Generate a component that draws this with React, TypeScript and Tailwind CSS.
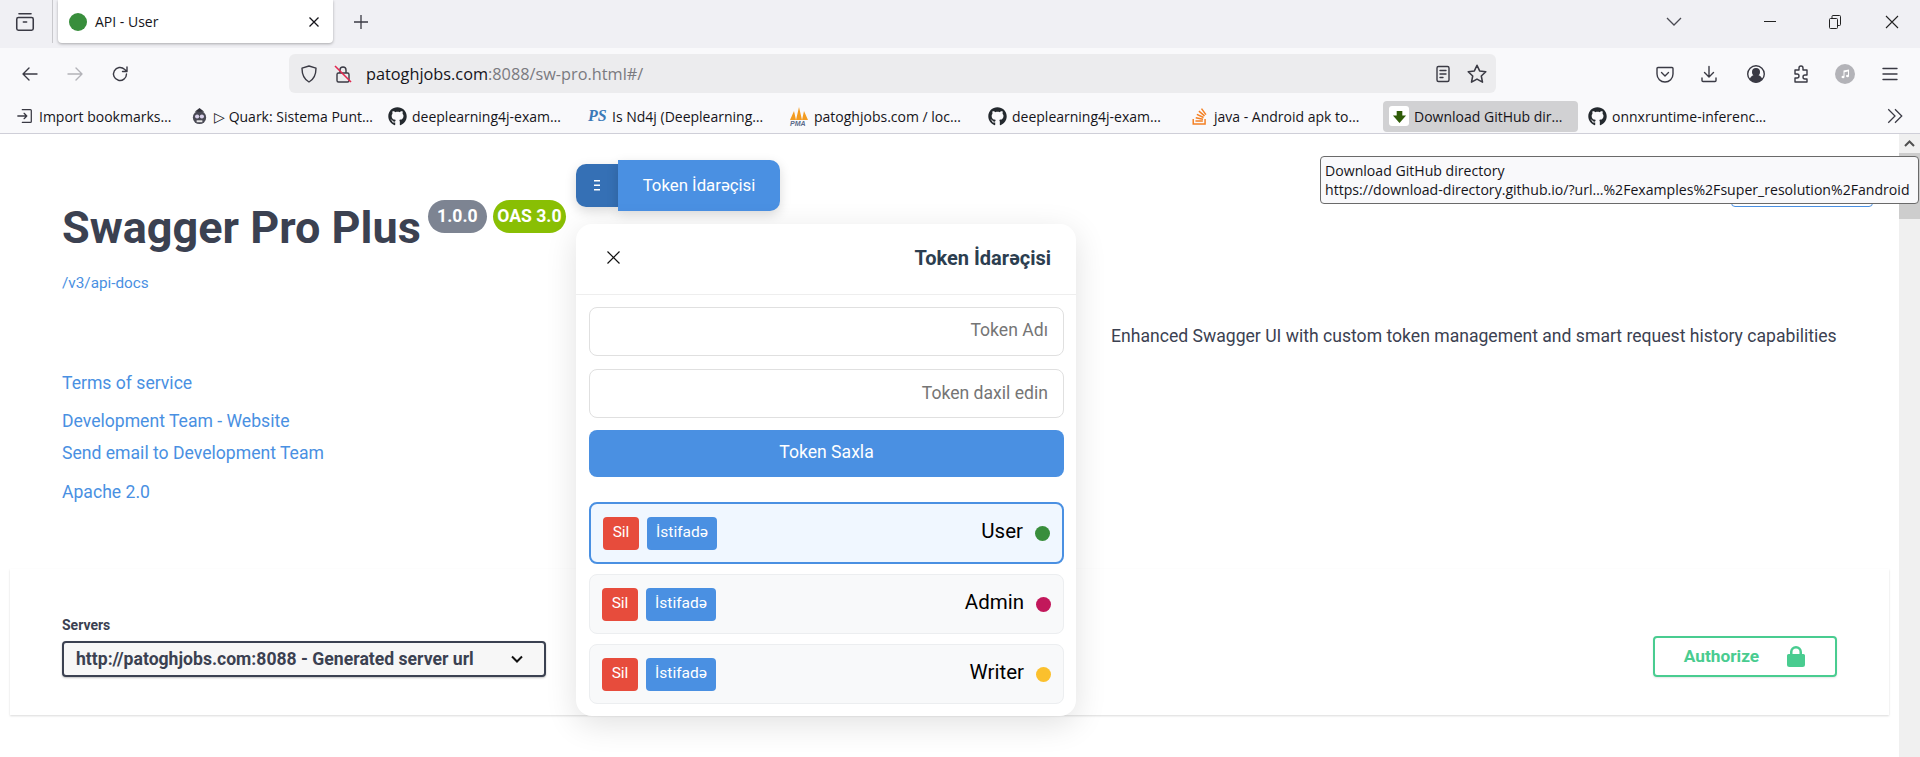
import { FaGithub, FaStackOverflow } from "react-icons/fa";

const ui = "font-['Open_Sans',sans-serif]";

function GH() {
  return <FaGithub className="w-[19px] h-[19px] text-[#24292e] shrink-0" />;
}

function Stroke({ children, size = 20, className = "" }: { children: React.ReactNode; size?: number; className?: string }) {
  return (
    <svg width={size} height={size} viewBox="0 0 20 20" fill="none" stroke="currentColor" strokeWidth="1.4" strokeLinecap="round" strokeLinejoin="round" className={className}>
      {children}
    </svg>
  );
}

const bookmarks = [
  {
    w: 174,
    text: "Import bookmarks…",
    icon: (
      <Stroke size={18} className="text-[#3a3a44]">
        <path d="M7 3h9a1 1 0 0 1 1 1v12a1 1 0 0 1-1 1H7M2 10h10M9 7l3 3-3 3" />
      </Stroke>
    ),
  },
  {
    w: 198,
    text: "▷ Quark: Sistema Punt…",
    icon: (
      <svg width="19" height="19" viewBox="0 0 20 20">
        <circle cx="10" cy="11" r="7" fill="#4a4a55" />
        <path d="M5 5l5-4 5 4z" fill="#33333c" />
        <circle cx="7.5" cy="10" r="2.2" fill="#d8d0ea" />
        <circle cx="12.5" cy="10" r="2.2" fill="#d8d0ea" />
        <rect x="7" y="14" width="6" height="2" fill="#e8e8e8" />
      </svg>
    ),
  },
  { w: 200, text: "deeplearning4j-exam…", icon: <GH /> },
  {
    w: 201,
    text: "Is Nd4j (Deeplearning…",
    icon: <span className="w-[19px] text-[16px] font-bold italic text-[#3b7ab8] font-['Liberation_Serif',serif] leading-none shrink-0">PS</span>,
  },
  {
    w: 199,
    text: "patoghjobs.com / loc…",
    icon: (
      <svg width="20" height="20" viewBox="0 0 20 20">
        <path d="M1 14L5 5l2 9zM7 14l3-13 3 13zM13 14l2-9 4 9z" fill="#f39c22" />
        <text x="1" y="20" fontSize="7" fontWeight="700" fontStyle="italic" fill="#5a6a8a" fontFamily="Liberation Sans">PMA</text>
      </svg>
    ),
  },
  { w: 202, text: "deeplearning4j-exam…", icon: <GH /> },
  {
    w: 199,
    text: "java - Android apk to…",
    icon: <FaStackOverflow className="w-[19px] h-[19px] text-[#f48024] shrink-0" />,
  },
  {
    w: 195,
    text: "Download GitHub dir…",
    active: true,
    icon: (
      <span className="w-[20px] h-[20px] bg-white rounded-[3px] flex items-center justify-center shrink-0">
        <svg width="15" height="15" viewBox="0 0 16 16">
          <path d="M5 2h6v5h4l-7 8-7-8h4z" fill="#2f5c08" />
        </svg>
      </span>
    ),
  },
  { w: 196, ml: 4, text: "onnxruntime-inferenc…", icon: <GH /> },
];

function Scrollbar() {
  return (
    <div className="w-[21px] shrink-0 bg-[#f0f0f0] flex flex-col">
      <div className="h-[19px] flex items-center justify-center">
        <svg width="11" height="8" viewBox="0 0 11 8" fill="none" stroke="#505050" strokeWidth="2">
          <path d="M1 6l4.5-4.5L10 6" />
        </svg>
      </div>
      <div className="h-[66px] bg-[#cdcdcd]" />
    </div>
  );
}

function TokenRow({ name, color, active }: { name: string; color: string; active?: boolean }) {
  return (
    <div
      className={
        active
          ? "h-[62px] rounded-[8px] border-2 border-[#4a90e2] bg-[#f0f7ff] px-[12px] flex items-center justify-between"
          : "h-[60px] rounded-[8px] border border-[#eceef0] bg-[#f8f9fa] px-[12px] flex items-center justify-between"
      }
    >
      <div className="flex gap-[8px]">
        <button className="w-[36px] h-[33px] rounded-[4px] bg-[#e74c3c] text-white text-[15.500px]">Sil</button>
        <button className="w-[70px] h-[33px] rounded-[4px] bg-[#4a90e2] text-white text-[15.500px]">İstifadə</button>
      </div>
      <div className="flex items-center gap-[12px]">
        <span className="text-[20.500px] text-black leading-none -mt-[3px]">{name}</span>
        <span className="w-[15px] h-[15px] rounded-full" style={{ backgroundColor: color }} />
      </div>
    </div>
  );
}

export default function App() {
  return (
    <div className="w-[1920px] h-[757px] overflow-hidden flex flex-col bg-white relative">
      {/* title bar */}
      <div className={`h-[48px] bg-[#f0f0f4] flex text-[#15141a] ${ui}`}>
        <div className="w-[53px] h-[43px] flex items-center justify-center border-r border-[#c8c8cc] mr-[5px]">
          <Stroke size={22} className="text-[#3a3a44] ml-[-3px]">
            <rect x="2.5" y="6" width="15" height="11.5" rx="1.5" />
            <path d="M4.5 2.5h11M8.5 10h3" />
          </Stroke>
        </div>
        <div className="w-[275px] h-[43px] bg-white rounded-b-[4px] shadow-[0_1px_3px_rgba(0,0,0,0.3)] flex items-center pl-[11px] pr-[12px]">
          <span className="w-[18px] h-[18px] rounded-full bg-[#388e3c]" />
          <span className="ml-[8px] text-[14px] flex-1">API - User</span>
          <svg width="14" height="14" viewBox="0 0 14 14" stroke="#15141a" strokeWidth="1.3">
            <path d="M2.5 2.5l9 9M11.5 2.5l-9 9" />
          </svg>
        </div>
        <div className="w-[56px] h-[43px] flex items-center justify-center">
          <svg width="16" height="16" viewBox="0 0 16 16" stroke="#3a3a44" strokeWidth="1.3">
            <path d="M8 1v14M1 8h14" />
          </svg>
        </div>
        <div className="flex-1" />
        <div className="h-[43px] flex items-center">
          <svg width="16" height="10" viewBox="0 0 16 10" fill="none" stroke="#4a4a52" strokeWidth="1.3">
            <path d="M1 1l7 7 7-7" />
          </svg>
          <div className="ml-[82px] w-[12px] h-[1px] bg-[#222]" />
          <svg className="ml-[53px]" width="12" height="14" viewBox="0 0 12 14" fill="none" stroke="#222" strokeWidth="1">
            <rect x="0.5" y="3.5" width="8" height="10" rx="1" />
            <path d="M3 3.5V1.5a1 1 0 0 1 1-1h6.5a1 1 0 0 1 1 1v8a1 1 0 0 1-1 1H8.5" />
          </svg>
          <svg className="ml-[44px] mr-[21px]" width="14" height="14" viewBox="0 0 14 14" stroke="#222" strokeWidth="1.1">
            <path d="M1 1l12 12M13 1L1 13" />
          </svg>
        </div>
      </div>

      {/* nav bar */}
      <div className={`h-[51px] bg-[#f9f9fb] flex items-center ${ui}`}>
        <div className="flex items-center text-[#3a3a44]">
          <Stroke className="ml-[20px]">
            <path d="M17 10H3M9 4l-6 6 6 6" />
          </Stroke>
          <Stroke className="ml-[25px] text-[#b3b3b8]">
            <path d="M3 10h14M11 4l6 6-6 6" />
          </Stroke>
          <Stroke className="ml-[25px]">
            <path d="M16.5 10a6.5 6.5 0 1 1-2-4.7L17 7.5M17 3v4.5h-4.5" />
          </Stroke>
        </div>
        <div className="ml-[159px] w-[1207px] h-[39px] rounded-[6px] bg-[#ececee] flex items-center text-[16.300px]">
          <Stroke size={20} className="ml-[10px] text-[#3a3a44]">
            <path d="M10 2l7 2.2c0 7-2 11-7 13.8C5 15.200 3 11.200 3 4.200z" />
          </Stroke>
          <svg className="ml-[14px]" width="20" height="20" viewBox="0 0 20 20" fill="none" strokeWidth="1.4">
            <rect x="4" y="9" width="12" height="9" rx="1.5" stroke="#3a3a44" />
            <path d="M7 9V6a3 3 0 0 1 6 0v3" stroke="#3a3a44" />
            <path d="M2 2l16 16" stroke="#e22850" strokeWidth="1.6" />
          </svg>
          <span className="ml-[13px] pt-[2px] text-[#15141a]">patoghjobs.com<span className="text-[#7a7a80]">:8088/sw-pro.html#/</span></span>
          <div className="flex-1" />
          <Stroke size={20} className="text-[#3a3a44]">
            <rect x="4" y="2.500" width="12" height="15" rx="1.500" />
            <path d="M7 6.500h6M7 10h6M7 13.500h3" />
          </Stroke>
          <Stroke size={22} className="ml-[13px] mr-[8px] text-[#3a3a44]">
            <path d="M10 2l2.400 5.200 5.600.700-4.100 3.900 1.100 5.600-5-2.800-5 2.800 1.100-5.600L2 7.900l5.600-.7z" />
          </Stroke>
        </div>
        <div className="flex items-center text-[#3a3a44]">
          <Stroke className="ml-[159px]">
            <path d="M3 3.500h14a1 1 0 0 1 1 1V10a8 8 0 0 1-16 0V4.500a1 1 0 0 1 1-1zM6.500 8.500L10 12l3.500-3.500" />
          </Stroke>
          <Stroke className="ml-[24px]">
            <path d="M10 2.500v10M5.500 8.500l4.500 4.500 4.500-4.500M3 14v2.500a1 1 0 0 0 1 1h12a1 1 0 0 0 1-1V14" />
          </Stroke>
          <svg className="ml-[27px]" width="20" height="20" viewBox="0 0 20 20" fill="none" stroke="currentColor" strokeWidth="1.4">
            <circle cx="10" cy="10" r="8.300" />
            <circle cx="10" cy="8" r="3.300" fill="currentColor" />
            <path d="M4.500 15c1-2.500 3-3.500 5.500-3.500s4.500 1 5.500 3.500c-1.500 1.800-3.500 2.800-5.500 2.800s-4-1-5.500-2.800z" fill="currentColor" />
          </svg>
          <Stroke className="ml-[25px]">
            <path d="M4 6h4V4a2 2 0 0 1 4 0v2h4v5h-2a2 2 0 0 0 0 4h2v3H4v-4h2a2 2 0 0 0 0-4H4z" />
          </Stroke>
          <span className="ml-[24px] w-[20px] h-[20px] rounded-full bg-[#b3b3b8] flex items-center justify-center">
            <svg width="10" height="10" viewBox="0 0 10 10" fill="#fff">
              <path d="M3.500 1.500L9 .5V7a1.500 1.200 0 1 1-1-1.100V2.500L4.500 3.200V8a1.500 1.200 0 1 1-1-1.100z" />
            </svg>
          </span>
          <Stroke className="ml-[25px] mr-[20px]">
            <path d="M3 4.500h14M3 10h14M3 15.500h14" />
          </Stroke>
        </div>
      </div>

      {/* bookmarks */}
      <div className={`h-[35px] bg-[#f9f9fb] border-b border-[#cfcfd8] flex items-center pl-[10px] text-[14px] text-[#15141a] ${ui}`}>
        {bookmarks.map((b) => (
          <div
            key={b.text + b.w}
            className={`h-[31px] flex items-center gap-[5px] px-[6px] whitespace-nowrap overflow-hidden rounded-[4px] ${b.active ? "bg-[#d1d1d3]" : ""}`}
            style={{ width: b.w, marginLeft: b.ml ?? 0 }}
          >
            {b.icon}
            <span>{b.text}</span>
          </div>
        ))}
        <div className="flex-1" />
        <svg className="mr-[16px]" width="18" height="18" viewBox="0 0 16 16" fill="none" stroke="#3a3a44" strokeWidth="1.1">
          <path d="M2 2l6 6-6 6M8 2l6 6-6 6" />
        </svg>
      </div>

      {/* page */}
      <div className="flex-1 flex min-h-0 font-['Roboto',sans-serif]">
        <div className="flex-1 relative min-w-0">
          <div className="px-[62px] pt-[64px] flex h-[435px]">
            <div className="w-[1049px]">
              <div className="flex items-start">
                <h1 className="text-[45px] leading-[60px] font-bold text-[#3b4151]">Swagger Pro Plus</h1>
                <span className="ml-[7px] mt-[2px] h-[33px] w-[59px] rounded-[17px] bg-[#7d8492] text-white text-[17.600px] font-bold flex items-center justify-center">1.0.0</span>
                <span className="ml-[6px] mt-[2px] h-[33px] w-[73px] rounded-[17px] bg-[#89bf04] text-white text-[17.600px] font-bold flex items-center justify-center">OAS 3.0</span>
              </div>
              <div className="mt-[15px] text-[15.300px] leading-[20px] text-[#4990e2]">/v3/api-docs</div>
              <div className="mt-[78px] text-[17.600px] leading-[24px] text-[#4990e2]">Terms of service</div>
              <div className="mt-[14px] text-[17.600px] leading-[24px] text-[#4990e2]">Development Team - Website</div>
              <div className="mt-[8px] text-[17.600px] leading-[24px] text-[#4990e2]">Send email to Development Team</div>
              <div className="mt-[15px] text-[17.600px] leading-[24px] text-[#4990e2]">Apache 2.0</div>
            </div>
            <p className="mt-[126px] text-[17.600px] leading-[24px] text-[#3b4151] whitespace-nowrap">
              Enhanced Swagger UI with custom token management and smart request history capabilities
            </p>
          </div>

          <div className="mx-[10px] h-[146px] bg-white shadow-[0_1px_2px_rgba(0,0,0,0.15)] px-[52px] flex items-start justify-between">
            <div className="pt-[47px]">
              <div className="text-[14px] leading-[18px] font-bold text-[#3b4151]">Servers</div>
              <div className="mt-[7px] w-[484px] h-[36px] rounded-[4px] border-2 border-[#3b4151] bg-[#f7f7f7] shadow-[0_1px_2px_rgba(0,0,0,0.25)] flex items-center justify-between pl-[12px] pr-[20px]">
                <span className="text-[17.600px] font-bold text-[#3b4151]">http://patoghjobs.com:8088 - Generated server url</span>
                <svg width="14" height="9" viewBox="0 0 14 9" fill="none" stroke="#111" strokeWidth="2">
                  <path d="M2 1.500l5 5 5-5" />
                </svg>
              </div>
            </div>
            <div className="pt-[67px]">
              <button className="w-[184px] h-[41px] rounded-[4px] border-2 border-[#49cc90] flex items-center justify-center gap-[27px] shadow-[0_1px_2px_rgba(0,0,0,0.1)]">
                <span className="text-[17.300px] font-bold text-[#49cc90]">Authorize</span>
                <svg width="20" height="24" viewBox="0 0 20 24" fill="#49cc90">
                  <path d="M4 9V7a6 6 0 0 1 12 0v2h1.500A1.500 1.500 0 0 1 19 10.500v9a2.500 2.500 0 0 1-2.500 2.500h-13A2.500 2.500 0 0 1 1 19.500v-9A1.500 1.500 0 0 1 2.500 9zm2.500 0h7V7a3.500 3.500 0 0 0-7 0z" />
                </svg>
              </button>
            </div>
          </div>

          {/* button hidden behind the tooltip */}
          <div className="absolute left-[1731px] top-[32px] w-[142px] h-[41px] rounded-[4px] border border-[#4a90e2]" />

          {/* token widget */}
          <div className="absolute left-[576px] top-[26px] flex items-center">
            <div className="w-[42px] h-[43px] rounded-l-[10px] bg-[#3570b5] flex items-center justify-center pr-[1px] shadow-[0_4px_12px_rgba(0,0,0,0.15)]">
              <svg width="8" height="11" viewBox="0 0 8 11" fill="#fff">
                <path d="M1 0h6v1.500H1zM1 4.500h6V6H1zM1 9h6v1.500H1z" />
              </svg>
            </div>
            <div className="w-[162px] h-[51px] rounded-r-[10px] bg-[#4a90e2] text-white text-[16.800px] flex items-center justify-center shadow-[0_4px_12px_rgba(0,0,0,0.15)]">
              Token İdarəçisi
            </div>
          </div>

          <div className="absolute left-[576px] top-[90px] w-[500px] h-[492px] bg-white rounded-[16px] shadow-[0_8px_32px_rgba(0,0,0,0.12)] flex flex-col">
            <div className="h-[71px] border-b border-[#eeeeee] flex items-center justify-between pl-[30px] pr-[25px] pb-[3px]">
              <svg width="15" height="15" viewBox="0 0 15 15" stroke="#111" strokeWidth="1.200">
                <path d="M1.500 1.500l12 12M13.500 1.500l-12 12" />
              </svg>
              <span className="text-[20px] font-bold text-[#2c3e50]">Token İdarəçisi</span>
            </div>
            <div className="pl-[13px] pr-[12px] pt-[12px] flex flex-col">
              <input placeholder="Token Adı" className="h-[49px] rounded-[8px] border border-[#e0e0e0] pl-[16px] pr-[15px] pb-[3px] text-right text-[17.600px] placeholder:text-[#757575] outline-none" />
              <input placeholder="Token daxil edin" className="mt-[13px] h-[49px] rounded-[8px] border border-[#e0e0e0] pl-[16px] pr-[15px] pb-[2px] text-right text-[17.600px] placeholder:text-[#757575] outline-none" />
              <button className="mt-[12px] h-[47px] rounded-[8px] bg-[#4a90e2] text-white text-[17.600px] pb-[2px]">Token Saxla</button>
              <div className="mt-[25px] flex flex-col gap-[10px]">
                <TokenRow name="User" color="#388e3c" active />
                <TokenRow name="Admin" color="#c2185b" />
                <TokenRow name="Writer" color="#fbc02d" />
              </div>
            </div>
          </div>

          {/* native tooltip */}
          <div className={`absolute left-[1320px] top-[22px] w-[599px] h-[48px] z-10 rounded-[4px] border border-[#6a6a6a] bg-[#f9f9fb] px-[4px] pt-[4px] text-[14.100px] leading-[20px] text-[#15141a] whitespace-nowrap ${ui}`}>
            <div className="leading-[19px]">Download GitHub directory</div>
            <div>https://download-directory.github.io/?url…%2Fexamples%2Fsuper_resolution%2Fandroid</div>
          </div>
        </div>
        <Scrollbar />
      </div>
    </div>
  );
}
